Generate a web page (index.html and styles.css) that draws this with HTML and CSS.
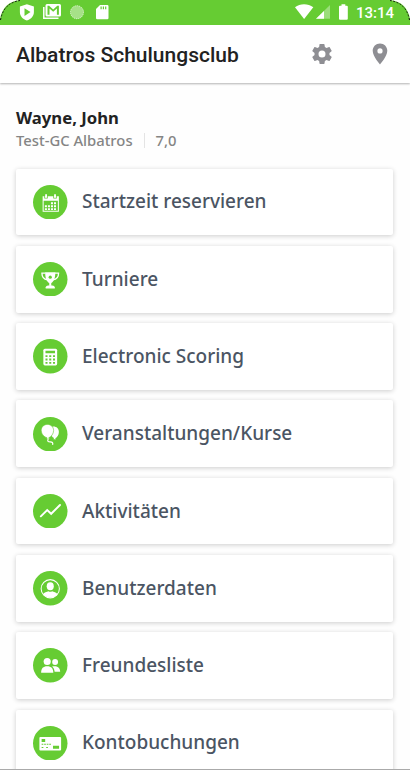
FILE: index.html
```html
<!DOCTYPE html>
<html lang="de">
<head>
<meta charset="utf-8">
<title>Albatros Schulungsclub</title>
<link rel="stylesheet" href="styles.css">
</head>
<body>
<div class="screen">
  <div class="status">
    <svg class="status-icons" width="100" height="24" viewBox="0 0 100 24" fill="#fff">
      <path fill-rule="evenodd" d="M12.900 4.200l7 2.400v5.600c0 3.900-3.200 7-7 8.400c-3.800-1.400-7-4.500-7-8.400V6.600zM10.500 8.300v7.600l6-3.800z"/>
      <path d="M29.800 7v11.300H44.500" fill="none" stroke="#fff" stroke-width="1.500"/>
      <path fill-rule="evenodd" d="M33 4h12.500a1.500 1.500 0 0 1 1.500 1.500v9.500a1.500 1.500 0 0 1-1.500 1.500H33a1.500 1.500 0 0 1-1.500-1.500V5.500A1.500 1.500 0 0 1 33 4zM33.500 5.800v9h2V8.400l3.700 3.300 3.700-3.300v6.400h2v-9h-1.600l-4.100 3.800-4.100-3.800z"/>
      <circle cx="63" cy="12.200" r="6.700" opacity=".42"/>
      <circle cx="63" cy="12.200" r="6.500" fill="none" stroke="#fff" stroke-width="1" stroke-dasharray="1 1" opacity=".6"/>
      <path fill-rule="evenodd" d="M86 5h7.300a1.200 1.200 0 0 1 1.200 1.200v11.900a1.200 1.200 0 0 1-1.200 1.200H83.200a1.200 1.200 0 0 1-1.200-1.200V9zM86.500 6.500v2.700h1.200V6.500zm2.300 0v2.700h1.200V6.500zm2.300 0v2.700h1.200V6.500z"/>
    </svg>
    <svg class="status-icons" width="60" height="24" viewBox="0 0 60 24" fill="#fff">
      <path d="M5 7.200c5-4 13-4 18.300 0L14.100 19z"/>
      <path d="M40 5v13.700H26z" opacity=".35"/>
      <path d="M34 11v7.700h-8z"/>
      <path d="M51.500 4.300h3.800v1.500h1.500a1 1 0 0 1 1 1v12a1 1 0 0 1-1 1h-6.800a1 1 0 0 1-1-1v-12a1 1 0 0 1 1-1h1.500z"/>
    </svg>
    <span class="clock">13:14</span>
    <svg class="corner" width="24" height="24" viewBox="0 0 24 24"><path d="M0 0H20Q3 2 0 19z" fill="#fff"/><path d="M.5 20Q3.500 3 20 .5" fill="none" stroke="#111" stroke-width="1" stroke-dasharray="2 1.500"/></svg>
    <svg class="corner right" width="24" height="24" viewBox="0 0 24 24"><path d="M0 0H20Q3 2 0 19z" fill="#fff"/><path d="M.5 20Q3.500 3 20 .5" fill="none" stroke="#111" stroke-width="1" stroke-dasharray="2 1.500"/></svg>
  </div>
  <header class="bar">
    <h1>Albatros Schulungsclub</h1>
    <svg width="24" height="24" viewBox="0 0 24 24" fill="#8e8e93"><path d="M19.430 12.980c.04-.32.070-.64.070-.98s-.03-.66-.07-.98l2.110-1.650c.19-.15.24-.42.120-.64l-2-3.460c-.12-.22-.39-.3-.61-.22l-2.490 1c-.52-.4-1.080-.73-1.690-.98l-.38-2.650A.488.488 0 0 0 14 2h-4c-.25 0-.46.180-.49.420l-.38 2.650c-.61.250-1.170.59-1.690.98l-2.490-1c-.23-.09-.49 0-.61.220l-2 3.460c-.13.220-.07.490.12.640l2.110 1.650c-.04.320-.07.650-.07.980s.03.660.07.980l-2.110 1.650c-.19.150-.24.420-.12.640l2 3.460c.12.220.39.300.61.220l2.490-1c.52.400 1.080.73 1.690.98l.38 2.650c.03.240.24.420.49.420h4c.25 0 .46-.18.490-.42l.38-2.650c.61-.25 1.170-.59 1.690-.98l2.490 1c.23.090.49 0 .61-.22l2-3.460c.12-.22.070-.49-.12-.64zM12 15.500a3.500 3.500 0 1 1 0-7 3.500 3.500 0 0 1 0 7z"/></svg>
    <svg class="pin" width="24" height="24" viewBox="0 0 24 24" fill="#8e8e93"><path d="M12 1.500c-4.100 0-7.300 3.200-7.300 7.300C4.700 14.300 12 22.500 12 22.500s7.300-8.200 7.300-13.700c0-4.100-3.200-7.300-7.300-7.300zm0 10a2.600 2.600 0 1 1 0-5.200 2.600 2.600 0 0 1 0 5.200z"/></svg>
  </header>
  <section class="user">
    <div class="name">Wayne, John</div>
    <div class="meta"><span class="club">Test-GC Albatros</span><span class="hcp">7,0</span></div>
  </section>
  <nav class="menu">
    <a class="card"><svg class="ico" viewBox="0 0 34 34"><circle cx="17" cy="17" r="17"/><g fill="#fff"><path fill-rule="evenodd" d="M9.500 11h16v15.300h-16zM10.500 15.500v9.800h14v-9.800z"/><path d="M12 9.200h1.800v3H12zm8.800 0h1.800v3h-1.800z"/><path d="M11.700 20h2v2h-2zm3 0h2v2h-2zm3-3h2v2h-2zm3 0h2v2h-2zm-3 3h2v2h-2zm3 0h2v2h-2zm-9 3h2v1.700h-2zm3 0h2v1.700h-2zm3 0h2v1.700h-2zm3 0h2v1.700h-2z"/></g><path d="M11.300 10v3h3v-3m5.900 0v3h3v-3" fill="none" stroke="#66cc33" stroke-width=".7"/></svg><span>Startzeit reservieren</span></a>
    <a class="card"><svg class="ico" viewBox="0 0 34 34"><circle cx="17" cy="17" r="17"/><g fill="#fff"><path d="M12 10h10c0 6-1.500 9-4 10.800v2.700h-2v-2.700C13.500 19 12 16 12 10z"/><path d="M12.500 25c0-1.300 2-2 4.500-2s4.500.7 4.500 2v1.200h-9z"/></g><path d="M12.400 11H8.800c0 3 1.700 5.900 5.500 6.500M21.600 11h3.600c0 3-1.700 5.900-5.500 6.500" fill="none" stroke="#fff" stroke-width="1.300"/><circle cx="17" cy="15" r="1.600"/></svg><span>Turniere</span></a>
    <a class="card"><svg class="ico" viewBox="0 0 34 34"><circle cx="17" cy="17" r="17"/><rect x="10.200" y="9.500" width="13.600" height="16.500" rx="1.500" fill="#fff"/><path d="M12.300 11.700h9.400v2.300h-9.400zM12.300 16h2v1.800h-2zm3.700 0h2v1.800h-2zm3.700 0h2v1.800h-2zm-7.400 3.300h2v1.800h-2zm3.700 0h2v1.800h-2zm3.700 0h2v1.800h-2zm-7.400 3.300h2v1.800h-2zm3.700 0h2v1.800h-2zm3.700 0h2v1.800h-2z"/></svg><span>Electronic Scoring</span></a>
    <a class="card"><svg class="ico" viewBox="0 0 34 34"><circle cx="17" cy="17" r="17"/><g fill="#fff"><path d="M19 9.500c3.900-.5 6.500 1.800 6.500 5.200 0 3-1.800 5.600-3.700 6.200l1 1.100h-2.600l.5-1.200c-1-.4-1.700-1.200-2.200-2z"/><path d="M14.200 7.300c3.700 0 6.100 2.600 6.100 6 0 3.200-2.300 6.200-4.800 7.200l1 1.200h-3l.3-1.200c-2.800-.7-5.700-3.700-5.700-7.200s2.600-6 6.100-6z" stroke="#66cc33" stroke-width=".6"/></g><path d="M15 21.500c-1.200 2.800 0 3 2 3 1.800.1 3 .7 2.300 3" fill="none" stroke="#fff" stroke-width="1.200"/></svg><span>Veranstaltungen/Kurse</span></a>
    <a class="card"><svg class="ico" viewBox="0 0 34 34"><circle cx="17" cy="17" r="17"/><path d="M7.700 22l6.300-6.200 3.900 3.700 8.700-8.700" fill="none" stroke="#fff" stroke-width="1.900" stroke-linecap="round"/></svg><span>Aktivitäten</span></a>
    <a class="card"><svg class="ico" viewBox="0 0 34 34"><circle cx="17" cy="17" r="17"/><circle cx="17" cy="17.500" r="9" fill="none" stroke="#fff" stroke-width="1"/><ellipse cx="17" cy="15" rx="3.500" ry="4" fill="#fff"/><path d="M9.900 22.800c1-1.700 3.700-2.500 5.300-2.900 1 .8 2.600.8 3.600 0 1.600.4 4.300 1.200 5.300 2.900a9 9 0 0 1-14.200 0z" fill="#fff"/></svg><span>Benutzerdaten</span></a>
    <a class="card"><svg class="ico" viewBox="0 0 34 34"><circle cx="17" cy="17" r="17"/><g fill="#fff"><circle cx="21.800" cy="13.800" r="2.900"/><path d="M18.800 18.300c4.200-1 7.800.6 8 5h-5.500c-.3-2.400-1-3.900-2.500-5z"/><circle cx="14" cy="13.300" r="3.500"/><path d="M8 24.500c0-4.500 2-6.500 6-6.500s6 2 6 6.500z"/></g></svg><span>Freundesliste</span></a>
    <a class="card"><svg class="ico" viewBox="0 0 34 34"><circle cx="17" cy="17" r="17"/><rect x="6.300" y="10.800" width="21.400" height="13.400" rx="1" fill="#fff"/><path d="M8.500 12.800h3.500v3H8.500zM19.700 19.500h6v2.800h-6z"/><path d="M8.500 18h9.500M8.500 21.300h2m2.500 0h2.500" fill="none" stroke="#66cc33" stroke-width="1" stroke-dasharray="1.700 .8"/></svg><span>Kontobuchungen</span></a>
  </nav>
</div>
</body>
</html>
```
FILE: styles.css
```css
* { box-sizing: border-box; }
body { margin: 0; background: #fff; }
.screen {
  height: 770px;
  overflow: hidden;
  display: flex;
  flex-direction: column;
  border-bottom: 1px solid #aaa;
  background: #fefefe;
  font-family: "Noto Sans", "Open Sans", sans-serif;
}
.status {
  position: relative;
  flex: none;
  height: 24.500px;
  display: flex;
  align-items: flex-start;
  padding: 0 17px 0 14px;
  background: #66cc33;
  color: #fff;
}
.status-icons { display: block; flex: none; }
.status-icons:first-child { width: 100px; margin-right: auto; }
.clock { width: 43.500px; padding-left: 6.500px; font: 500 15px/26px Roboto, sans-serif; white-space: nowrap; }
.corner { position: absolute; left: 0; top: 0; }
.corner.right { left: auto; right: 0; transform: scaleX(-1); }
.bar {
  flex: none;
  height: 58.500px;
  display: flex;
  align-items: center;
  padding: 0 18px 0 16px;
  background: #fff;
  box-shadow: 0 1px 2px rgba(0, 0, 0, .3);
}
h1 { flex: 1; margin: 0; padding-top: 3px; font: 500 21px/30px Roboto, sans-serif; color: #222; white-space: nowrap; }
.pin { margin-left: 34.500px; }
.user { flex: none; height: 85.500px; padding: 23px 16px 0; }
.name { font-size: 16.700px; line-height: 23px; font-weight: 700; color: #222; }
.meta { display: flex; align-items: center; font-size: 14.800px; line-height: 22px; font-weight: 500; color: #858585; }
.club { padding-right: 11px; border-right: 1px solid #e4e4e4; line-height: 15px; }
.hcp { padding-left: 11px; }
.menu { display: flex; flex-direction: column; gap: 10.500px; padding: 0 17px 0 16px; }
.card {
  flex: none;
  height: 66.800px;
  display: flex;
  align-items: center;
  gap: 14.500px;
  padding-left: 17px;
  border-radius: 2px;
  background: #fff;
  box-shadow: 0 1px 5px rgba(0, 0, 0, .2);
  font-size: 19px;
  line-height: 26px;
  font-weight: 500;
  color: #4b5563;
  white-space: nowrap;
}
.card span { padding-bottom: 1px; }
.ico { width: 34.500px; height: 34.500px; flex: none; fill: #66cc33; }
```
